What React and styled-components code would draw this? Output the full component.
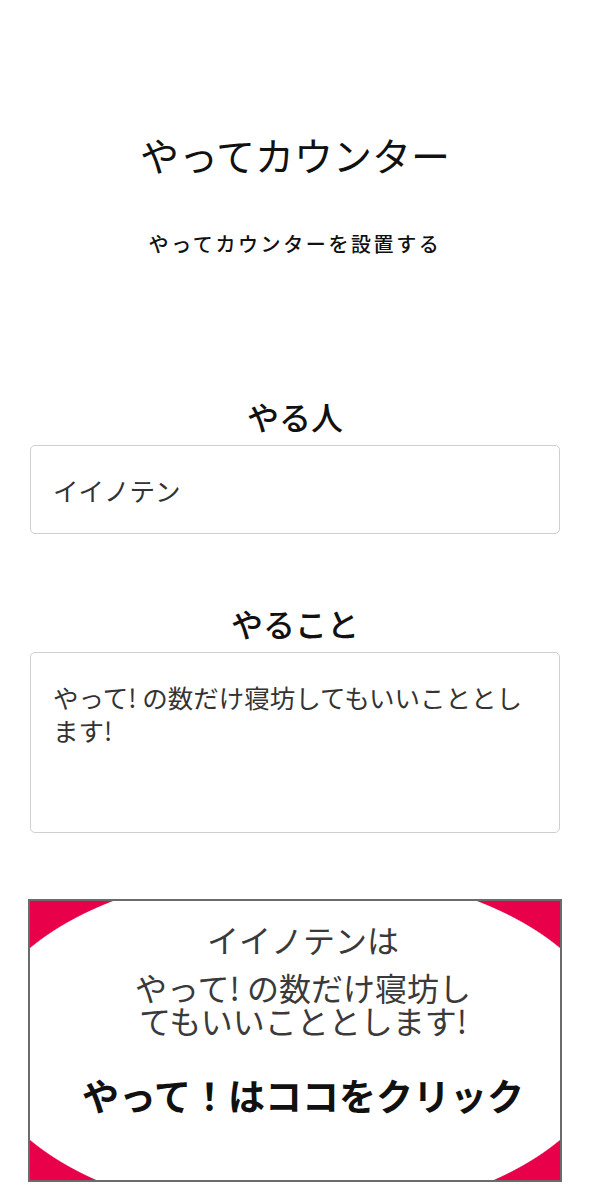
import React, { useState } from "react";
import styled, { createGlobalStyle } from "styled-components";

const GlobalStyle = createGlobalStyle`
  html, body {
    margin: 0;
    padding: 0;
    background: #fff;
  }
  body {
    font-family: "Noto Sans CJK JP", "Noto Sans", sans-serif;
    color: #111;
  }
  * {
    box-sizing: border-box;
  }
`;

function App() {
  const [name, setName] = useState("イイノテン");
  const [task, setTask] = useState("やって! の数だけ寝坊してもいいこととします!");
  const [count, setCount] = useState(0);

  return (
    <>
      <GlobalStyle />
      <Page>
        <Header>
          <Title>やってカウンター</Title>
          <SubTitle>やってカウンターを設置する</SubTitle>
        </Header>

        <Field>
          <Label htmlFor="who">やる人</Label>
          <TextInput
            id="who"
            type="text"
            value={name}
            onChange={(e) => setName(e.target.value)}
          />
        </Field>

        <Field $gap={70}>
          <Label htmlFor="what">やること</Label>
          <TextArea
            id="what"
            value={task}
            onChange={(e) => setTask(e.target.value)}
          />
        </Field>

        <Card onClick={() => setCount(count + 1)}>
          <CardMessage>
            <Who>{name}は</Who>
            <What>{task}</What>
          </CardMessage>
          <ClickText>やって！はココをクリック</ClickText>
        </Card>
      </Page>
    </>
  );
}

const Page = styled.main`
  width: 590px;
  padding: 131px 28px 18px;
  display: flex;
  flex-direction: column;
  align-items: stretch;
`;

const Header = styled.header`
  display: flex;
  flex-direction: column;
  align-items: center;
  gap: 52px;
  margin-bottom: 138px;
`;

const Title = styled.h1`
  margin: 0;
  font-size: 39px;
  line-height: 46px;
  font-weight: 400;
  color: #111;
`;

const SubTitle = styled.p`
  margin: 0;
  font-size: 20px;
  line-height: 30px;
  letter-spacing: 2.6px;
  font-weight: 500;
  color: #111;
`;

const Field = styled.div`
  display: flex;
  flex-direction: column;
  align-items: center;
  gap: 10px;
  padding: 0 2px;
  margin-top: ${(p) => p.$gap || 0}px;
`;

const Label = styled.label`
  font-size: 32px;
  line-height: 38px;
  font-weight: 500;
  color: #111;
`;

const boxStyles = `
  width: 100%;
  border: 1.5px solid #cfcfcf;
  border-radius: 5px;
  background: #fff;
  font-family: "Noto Sans CJK JP", "Noto Sans", sans-serif;
  font-size: 25.5px;
  color: #333;
  outline: none;
`;

const TextInput = styled.input`
  ${boxStyles}
  height: 89px;
  padding: 0 22px;
`;

const TextArea = styled.textarea`
  ${boxStyles}
  height: 181px;
  padding: 27px 22px 20px 22px;
  line-height: 33px;
  resize: none;
`;

const Card = styled.section`
  margin-top: 66px;
  height: 283px;
  border: 2px solid #6b6b6b;
  background: radial-gradient(
    ellipse 318px 175px at 50% 51.25%,
    #fff 99.5%,
    #e8004a 100%
  );
  display: flex;
  flex-direction: column;
  align-items: center;
  padding: 20px 0 0 16px;
  cursor: pointer;
  user-select: none;
`;

const CardMessage = styled.div`
  max-width: 350px;
  text-align: center;
  color: #3a3a3a;
  font-size: 32px;
`;

const Who = styled.p`
  margin: 0 0 14px;
  line-height: 36px;
`;

const What = styled.p`
  margin: 0;
  line-height: 33px;
`;

const ClickText = styled.p`
  margin: 36px 0 0;
  font-size: 37px;
  line-height: 44px;
  font-weight: 700;
  color: #111;
`;

export default App;
